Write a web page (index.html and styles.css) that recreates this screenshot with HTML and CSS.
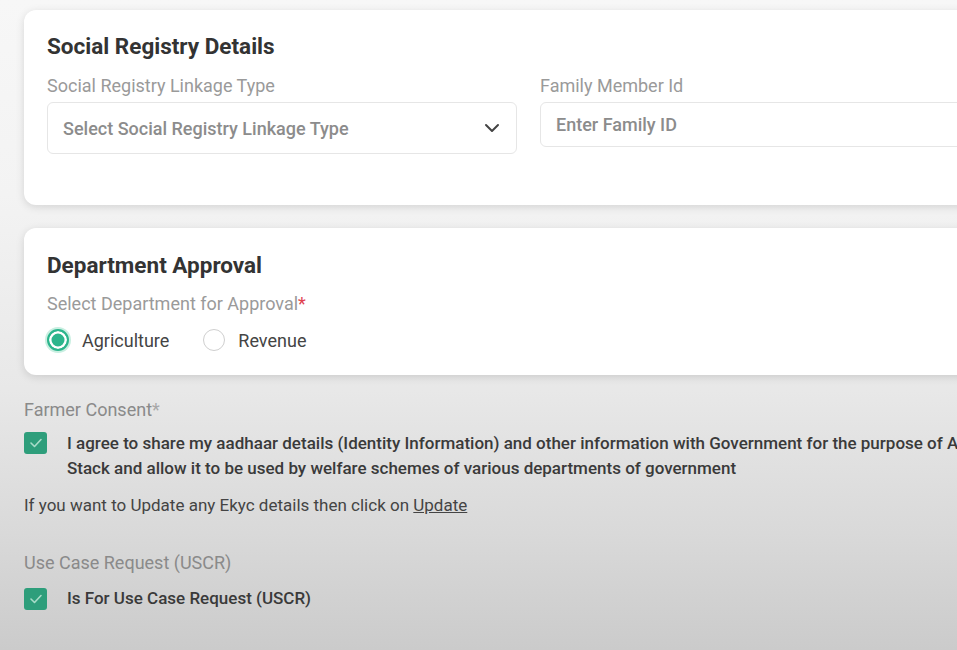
FILE: index.html
```html
<!doctype html>
<html>
<head>
    <title>Farmer Registration</title>
    <link rel="stylesheet" href="styles.css">
</head>
<body>
    <div class="page">
        <section class="card card--social">
            <h2 class="card__title">Social Registry Details</h2>
            <div class="fields">
                <div class="field">
                    <label class="field__label">Social Registry Linkage Type</label>
                    <div class="field__select">
                        <span class="field__placeholder">Select Social Registry Linkage Type</span>
                        <svg class="field__chevron" width="16" height="10" viewBox="0 0 16 10">
                            <polyline points="2,2 8,8 14,2" fill="none" stroke="#444" stroke-width="2" stroke-linecap="round" stroke-linejoin="round"/>
                        </svg>
                    </div>
                </div>
                <div class="field">
                    <label class="field__label">Family Member Id</label>
                    <div class="field__input">
                        <span class="field__placeholder">Enter Family ID</span>
                    </div>
                </div>
            </div>
        </section>

        <section class="card card--dept">
            <h2 class="card__title">Department Approval</h2>
            <div class="field__label">Select Department for Approval<span class="req">*</span></div>
            <div class="radios">
                <div class="radio radio--on">
                    <span class="radio__dot"></span>
                    <span class="radio__text">Agriculture</span>
                </div>
                <div class="radio">
                    <span class="radio__dot"></span>
                    <span class="radio__text">Revenue</span>
                </div>
            </div>
        </section>

        <div class="consent">
            <div class="consent__label">Farmer Consent<span class="star">*</span></div>
            <div class="check">
                <span class="check__box">
                    <svg width="14" height="12" viewBox="0 0 14 12"><polyline points="2,6 5.5,9.5 12,2.5" fill="none" stroke="#a9dcc9" stroke-width="1.6" stroke-linecap="round" stroke-linejoin="round"/></svg>
                </span>
                <p class="check__text">I agree to share my aadhaar details (Identity Information) and other information with Government for the purpose of Authentication and generation of Farmer ID in Agri<br>Stack and allow it to be used by welfare schemes of various departments of government</p>
            </div>
            <p class="update">If you want to Update any Ekyc details then click on <a href="#" class="update__link">Update</a></p>

            <div class="consent__label consent__label--uscr">Use Case Request (USCR)</div>
            <div class="check check--single">
                <span class="check__box">
                    <svg width="14" height="12" viewBox="0 0 14 12"><polyline points="2,6 5.5,9.5 12,2.5" fill="none" stroke="#a9dcc9" stroke-width="1.6" stroke-linecap="round" stroke-linejoin="round"/></svg>
                </span>
                <p class="check__text">Is For Use Case Request (USCR)</p>
            </div>
        </div>
    </div>
</body>
</html>
```

FILE: styles.css
```css
* {
    box-sizing: border-box;
}

html, body {
    height: 100%;
}

body {
    margin: 0;
    overflow: hidden;
    font-family: Roboto, "Liberation Sans", sans-serif;
    background: linear-gradient(to bottom, #f7f7f7 0%, #f3f3f3 30%, #e8e8e8 60%, #d9d9d9 82%, #cbcbcb 100%);
}

.page {
    width: 1500px;
    padding: 10px 0 0 24px;
}

.card {
    background: #fff;
    border-radius: 12px;
    box-shadow: 0 2px 8px rgba(0, 0, 0, 0.13);
    padding: 24px 23px 51px;
}

.card__title {
    margin: 0;
    font-size: 22.5px;
    line-height: 24px;
    font-weight: 700;
    color: #333;
}

.fields {
    display: grid;
    grid-template-columns: 470px 470px;
    column-gap: 23px;
    align-items: start;
    margin-top: 18px;
}

.field__label {
    display: block;
    font-size: 18px;
    line-height: 20px;
    color: #9a9a9a;
}

.field__select,
.field__input {
    margin-top: 6px;
    display: flex;
    align-items: center;
    border: 1px solid #e6e6e6;
    border-radius: 6px;
    padding: 0 16px 0 15px;
    background: #fff;
}

.field__select {
    height: 52px;
    justify-content: space-between;
}

.field__input {
    height: 45px;
}

.field__placeholder {
    font-size: 18px;
    font-weight: 500;
    color: #8c8c8c;
}

.field__chevron {
    display: block;
}

/*-------- Department card --------*/

.card--dept {
    margin-top: 23px;
    padding: 25px 23px 24px;
}

.card--dept .field__label {
    margin-top: 17px;
}

.req {
    color: #e0414f;
}

.radios {
    display: flex;
    gap: 34px;
    margin-top: 15px;
}

.radio {
    display: flex;
    align-items: center;
    gap: 13px;
}

.radio__dot {
    width: 22px;
    height: 22px;
    border-radius: 50%;
    border: 1.5px solid #cfcfcf;
    background: #fff;
}

.radio--on .radio__dot {
    border: 2px solid #2bb58c;
    background: #2bb58c;
    box-shadow: inset 0 0 0 2.5px #fff, 0 0 0 2px #c9efe1;
}

.radio__text {
    font-size: 18px;
    color: #444;
}

/*-------- Consent --------*/

.consent {
    padding-top: 25px;
}

.consent__label {
    font-size: 18px;
    line-height: 20px;
    color: #8a8a8a;
}

.star {
    color: #a8a8a8;
}

.check {
    display: flex;
    align-items: flex-start;
    margin-top: 11px;
}

.check__box {
    flex: none;
    width: 23px;
    height: 22px;
    margin-top: 1px;
    border-radius: 3px;
    background: #2e9e7b;
    display: flex;
    align-items: center;
    justify-content: center;
}

.check__text {
    margin: 0 0 0 20px;
    font-size: 17px;
    line-height: 25px;
    font-weight: 500;
    color: #3a3a3a;
    white-space: nowrap;
}

.update {
    margin: 14px 0 0;
    font-size: 17px;
    line-height: 20px;
    color: #444;
}

.update__link {
    color: #444;
    text-decoration: underline;
}

.consent__label--uscr {
    margin-top: 38px;
}

.check--single {
    margin-top: 14px;
}

.check--single .check__text {
    line-height: 22px;
}
```
